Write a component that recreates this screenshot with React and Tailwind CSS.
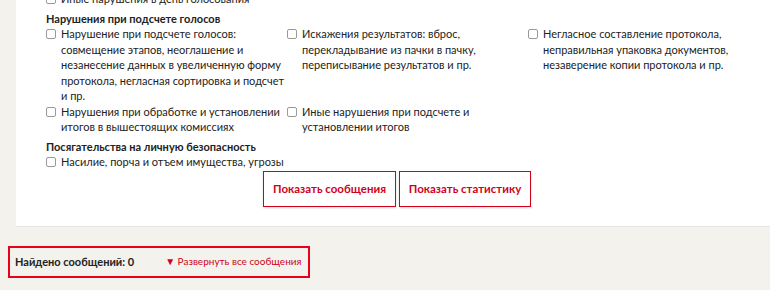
import React from "react";

const font = { fontFamily: 'Lato, "Noto Sans", sans-serif' };

function Check({ children }) {
    return (
        <label className="flex items-start gap-[5px]">
            <span className="mt-[3px] w-[10px] h-[10px] shrink-0 border border-[#9a9a9a] rounded-[2px] bg-white" />
            <span>{children}</span>
        </label>
    );
}

function App() {
    return (
        <div className="w-[770px] h-[290px] overflow-hidden bg-[#f3f2ec] text-[#222] text-[11px] leading-[15.5px]" style={font}>
            <div className="ml-4 w-[762px] h-[227px] bg-white border-b border-[#e4e3dd] pl-[30px] overflow-hidden">
                <div className="mt-[-9px]">
                    <Check>Иные нарушения в день голосования</Check>
                </div>
                <h4 className="mt-[4px] font-bold">Нарушения при подсчете голосов</h4>
                <div className="grid grid-cols-[241px_241px_241px]">
                    <Check>Нарушение при подсчете голосов: совмещение этапов, неоглашение и незанесение данных в увеличенную форму протокола, негласная сортировка и подсчет и пр.</Check>
                    <Check>Искажения результатов: вброс, перекладывание из пачки в пачку, переписывание результатов и пр.</Check>
                    <Check>Негласное составление протокола, неправильная упаковка документов, незаверение копии протокола и пр.</Check>
                    <Check>Нарушения при обработке и установлении итогов в вышестоящих комиссиях</Check>
                    <Check>Иные нарушения при подсчете и установлении итогов</Check>
                </div>
                <h4 className="mt-[4px] font-bold">Посягательства на личную безопасность</h4>
                <div className="grid grid-cols-[241px_241px_241px]">
                    <Check>Насилие, порча и отъем имущества, угрозы</Check>
                </div>
                <div className="flex justify-center gap-[3px] pr-[30px] mt-[1px]">
                    <button className="w-[133px] h-[36px] whitespace-nowrap border border-[#d0021b] text-[#d0021b] font-bold text-[11.5px] shadow-[0_1px_2px_rgba(0,0,0,0.15)]">Показать сообщения</button>
                    <button className="w-[132px] h-[36px] whitespace-nowrap border border-[#d0021b] text-[#d0021b] font-bold text-[11.5px] shadow-[0_1px_2px_rgba(0,0,0,0.15)]">Показать статистику</button>
                </div>
            </div>
            <div className="ml-2 mt-[19px] w-[302px] h-[32px] border-2 border-[#e8001c] flex items-center pl-[5px] whitespace-nowrap">
                <span className="font-bold text-[11px]">Найдено сообщений: 0</span>
                <span className="ml-[31px] text-[#d0021b] text-[10px]">▼ Развернуть все сообщения</span>
            </div>
        </div>
    );
}

export default App;
